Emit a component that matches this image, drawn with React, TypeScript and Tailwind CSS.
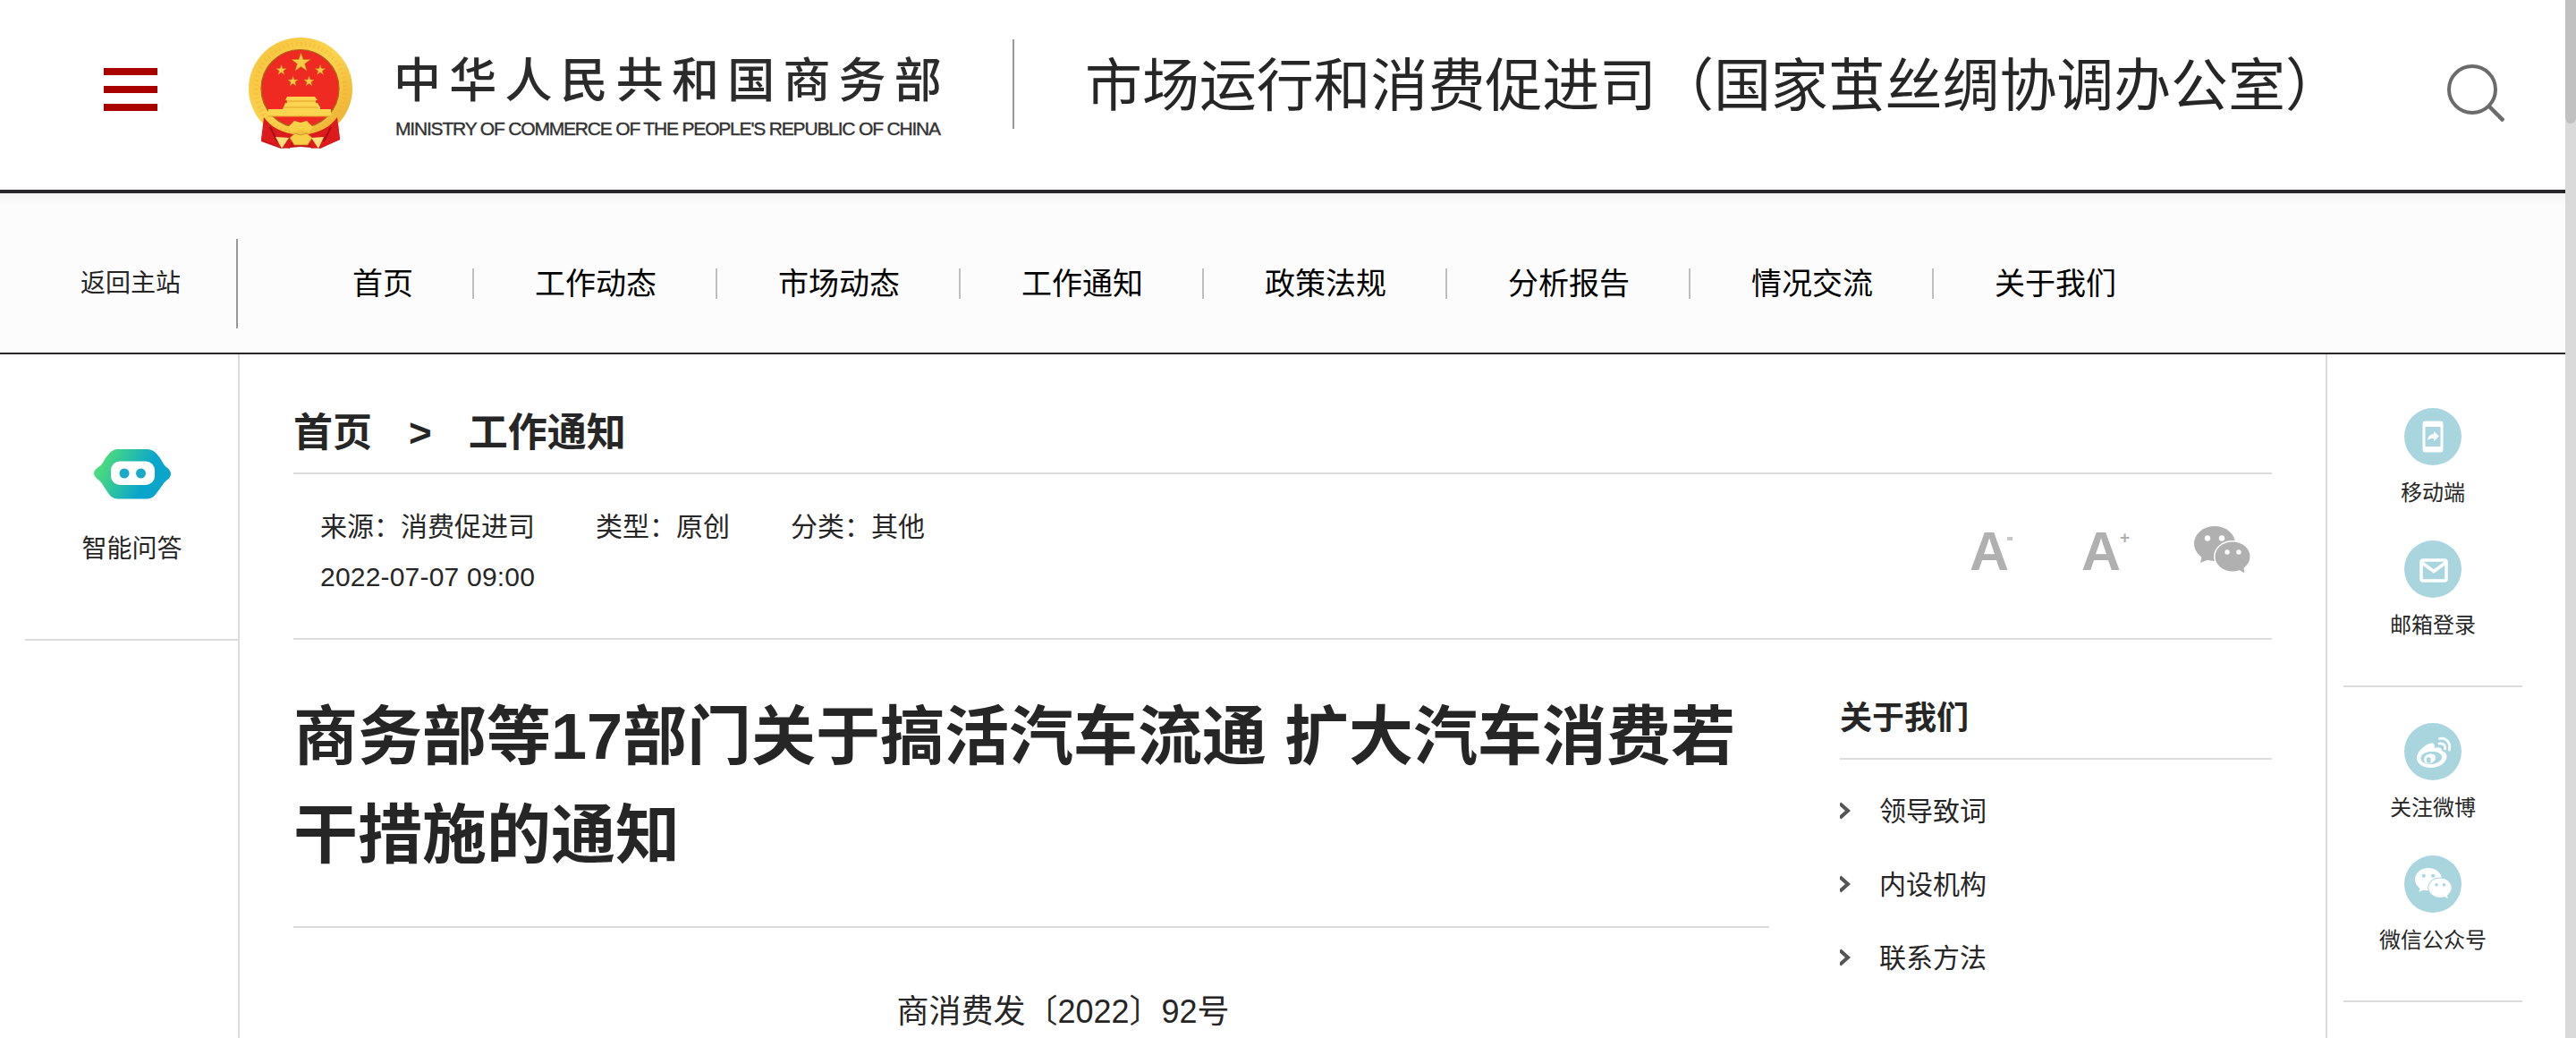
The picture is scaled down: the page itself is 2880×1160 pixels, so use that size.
import { clsx } from 'clsx';

const NAV_ITEMS = ['首页', '工作动态', '市场动态', '工作通知', '政策法规', '分析报告', '情况交流', '关于我们'];
const ABOUT_LINKS = ['领导致词', '内设机构', '联系方法'];
const META = ['来源：消费促进司', '类型：原创', '分类：其他'];

function Star({ x, y, r }: { x: number; y: number; r: number }) {
    const points = Array.from({ length: 10 }, (_, i) => {
        const radius = i % 2 === 0 ? r : r * 0.4;
        const angle = (Math.PI / 5) * i - Math.PI / 2;
        return `${x + radius * Math.cos(angle)},${y + radius * Math.sin(angle)}`;
    }).join(' ');

    return <polygon points={points} fill="#f6cc45" stroke="#c9791d" strokeWidth="0.6" />;
}

function Emblem() {
    return (
        <svg viewBox="0 0 116 124" className="h-[124px] w-[116px]">
            <defs>
                <linearGradient id="gold" x1="0" y1="0" x2="1" y2="1">
                    <stop offset="0" stopColor="#f6c23c" />
                    <stop offset="0.5" stopColor="#fbd34f" />
                    <stop offset="1" stopColor="#e9a92c" />
                </linearGradient>
            </defs>
            <path d="M18 88 L14 116 L36 124 L58 122 L80 124 L102 114 L99 88 Z" fill="#c81118" />
            <ellipse cx="58" cy="57" rx="58" ry="57" fill="url(#gold)" />
            <circle cx="58" cy="57" r="50" fill="none" stroke="#eda92b" strokeWidth="5" strokeDasharray="2 3" opacity="0.3" />
            <circle cx="57.5" cy="57" r="43.5" fill="#ee2a22" stroke="#a8681c" strokeWidth="1.2" />
            <Star x={58.5} y={28} r={11} />
            <Star x={36.5} y={36.5} r={6} />
            <Star x={80} y={36.5} r={6} />
            <Star x={49.5} y={49} r={6} />
            <Star x={67.5} y={49} r={6} />
            <path
                d="M43 66 h31 l3 4 h-2 v3 h2 l3 5 v2 h12 v8 h-70 v-8 h16 l3 -7 h2 v-3 h-2 Z"
                fill="#fbd450"
            />
            <path d="M39 78 h38 M42 71 h32" stroke="#e7a02b" strokeWidth="1" fill="none" />
            <path d="M22 88 H92" stroke="#e7a02b" strokeWidth="1" />
            <path d="M17 89 C24 99 36 106 50 108 L46 124 L34 122 L14 114 Z" fill="#dd1a1c" />
            <path d="M99 89 C92 99 80 106 66 108 L70 124 L82 122 L102 114 Z" fill="#dd1a1c" />
            <path d="M24 100 L32 116 M92 100 L84 116" stroke="#a80e13" strokeWidth="2" fill="none" />
            <path d="M44 100 L51 93 L58 95 L65 93 L72 100 L67 106 L58 103 L49 106 Z" fill="#f9cf48" />
            <path d="M46 112 L52 107 L58 109 L65 107 L71 112 L66 120 H51 Z" fill="#f9cf48" stroke="#c8871f" strokeWidth="0.8" />
            <path d="M30 111 L45 112 L37 124 Z M84 111 L70 112 L78 124 Z" fill="#fae07c" />
        </svg>
    );
}

function SearchIcon() {
    return (
        <svg viewBox="0 0 64 64" className="h-16 w-16" fill="none" stroke="#6b6b6b" strokeWidth="4">
            <circle cx="28" cy="28" r="26" />
            <path d="M46.5 46.5 L63 63" strokeWidth="4.5" />
        </svg>
    );
}

function RobotIcon() {
    return (
        <svg viewBox="0 0 86 56" className="h-14 w-[86px]">
            <defs>
                <linearGradient id="robot" x1="0" y1="0.3" x2="1" y2="0.6">
                    <stop offset="0.1" stopColor="#4ada7f" />
                    <stop offset="0.7" stopColor="#0aa5cb" />
                </linearGradient>
            </defs>
            <path
                d="M27 0 H59 Q65 0 69 4 Q74 9 77 15 Q78.500 18 81 20 Q86 23.500 86 27.500 Q86 31.500 81 35 Q78.500 37 76 41 L69 50.500 Q65 55.500 59 55.500 H27 Q21 55.500 17 50.500 L10 40 Q8.500 37.500 6 35 Q0 30.500 0 27 Q0 23.500 5 20 Q8.500 18 10 15 Q13 9 17 5 Q21 0 27 0 Z"
                fill="url(#robot)"
            />
            <rect x="19" y="13.500" width="49" height="26.500" rx="10" fill="#fff" />
            <circle cx="34" cy="27" r="5.500" fill="#1aa9c9" />
            <circle cx="52.500" cy="27" r="5.500" fill="#1aa9c9" />
        </svg>
    );
}

function WechatShape({ color, eyes }: { color: string; eyes: string }) {
    return (
        <>
            <path d="M9 32 L7 41 L17 37 Z" fill={color} />
            <ellipse cx="23" cy="19.500" rx="23" ry="19.500" fill={color} />
            <circle cx="15" cy="13.500" r="3.200" fill={eyes} />
            <circle cx="31" cy="13.500" r="3.200" fill={eyes} />
            <ellipse cx="43" cy="34" rx="21" ry="18" fill={eyes} />
            <path d="M49 48 L56.500 52.500 L55 44 Z" fill={color} />
            <ellipse cx="43" cy="34" rx="19.500" ry="16.500" fill={color} />
            <circle cx="37" cy="29" r="2.700" fill={eyes} />
            <circle cx="50" cy="29" r="2.700" fill={eyes} />
        </>
    );
}

const PhoneIcon = () => (
    <>
        <rect x="22" y="16" width="20" height="32" rx="2" fill="none" stroke="#fff" strokeWidth="3" />
        <path d="M21 15 H43 V21 H21 Z M21 43 H43 V49 H21 Z" fill="#fff" />
        <path d="M26 36 Q27 29 33 29 V26 L39 31.500 L33 37 V34 Q29 33.500 26 36 Z" fill="#fff" />
    </>
);

const MailIcon = () => (
    <>
        <rect x="19" y="22" width="28" height="23" rx="2" fill="none" stroke="#fff" strokeWidth="3.500" />
        <path d="M20 25 L33 34.500 L46 25" fill="none" stroke="#fff" strokeWidth="3.500" />
    </>
);

const WeiboIcon = () => (
    <>
        <path
            fillRule="evenodd"
            fill="#fff"
            d="M14 39 C14 32 24 22.500 31 22.500 Q35 23 33.500 28 Q42 25.500 42 31 Q48 33 47.500 38 C47 45 38 50 30 50 C21 50 14 46 14 39 Z M18.500 39.500 C19 44 24 46.500 30.500 46 C37 45.500 42.500 42 42 37.500 C41.500 33.500 36 31.500 29.500 32 C23 32.500 18 35.500 18.500 39.500 Z"
        />
        <path fillRule="evenodd" fill="#fff" d="M22 41 C22 36.500 26 34.500 30 34.500 C34.500 34.500 36 38 34.500 41 C32.500 45 28 46 25 45 C23 44.300 22 43 22 41 Z M25 41.500 A2.500 2.200 0 1 0 29.500 41.500 A2.500 2.200 0 1 0 25 41.500 Z" />
        <path d="M39 23 C43 22 46.500 25 45.500 29 M39.500 17.500 C46 16 52 21 50.500 30" fill="none" stroke="#fff" strokeWidth="2.800" strokeLinecap="round" />
    </>
);

const WechatIcon = () => (
    <g transform="translate(12 14) scale(0.65)">
        <WechatShape color="#fff" eyes="#a9d5df" />
    </g>
);

const TOOL_GROUPS = [
    [
        { label: '移动端', Icon: PhoneIcon },
        { label: '邮箱登录', Icon: MailIcon },
    ],
    [
        { label: '关注微博', Icon: WeiboIcon },
        { label: '微信公众号', Icon: WechatIcon },
    ],
];

function Header() {
    return (
        <header className="flex h-[216px] items-start border-b-4 border-[#28262a] bg-white">
            <button className="mt-[76px] ml-[116px] flex w-[60px] flex-col gap-3">
                <span className="h-2 w-full bg-[#a90000]" />
                <span className="h-2 w-full bg-[#a90000]" />
                <span className="h-2 w-full bg-[#a90000]" />
            </button>
            <div className="mt-[42px] ml-[102px] flex">
                <Emblem />
                <div className="ml-[46px] w-[632px] whitespace-nowrap">
                    <div className="mt-3 text-[53px] leading-[74px] font-medium tracking-[9.2px] text-[#2b2b2b]">
                        中华人民共和国商务部
                    </div>
                    <div className="mt-1 ml-0.5 text-[21px] leading-6 tracking-[-1.18px] text-[#333] [-webkit-text-stroke:0.4px_#333]">
                        MINISTRY OF COMMERCE OF THE PEOPLE'S REPUBLIC OF CHINA
                    </div>
                </div>
            </div>
            <div className="mt-11 ml-[60px] h-[100px] w-0.5 bg-[#999]" />
            <h1 className="mt-12 ml-[79px] w-[1523px] text-[64px] leading-[96px] tracking-[-0.1px] whitespace-nowrap">
                市场运行和消费促进司（国家茧丝绸协调办公室）
            </h1>
            <button className="mt-[72px]">
                <SearchIcon />
            </button>
        </header>
    );
}

function Nav() {
    return (
        <nav className="flex h-[180px] items-center border-b-2 border-[#28262a] bg-[#fcfcfc] bg-linear-to-b from-[#f5f5f6] to-[#fcfcfc] to-8% pt-6">
            <a className="flex h-[100px] w-[266px] items-center border-r-2 border-[#999] pl-[90px] text-[28px]">返回主站</a>
            <ul className="flex pl-[60px]">
                {NAV_ITEMS.map((item, i) => (
                    <li
                        key={item}
                        className={clsx(
                            'h-[34px] pr-[66px] pl-[68px] text-[34px] leading-[34px] whitespace-nowrap text-black',
                            i < NAV_ITEMS.length - 1 && 'border-r-2 border-[#bfbfbf]',
                        )}
                    >
                        {item}
                    </li>
                ))}
            </ul>
        </nav>
    );
}

function LeftRail() {
    return (
        <aside className="w-[268px] border-r-2 border-[#dcdcdc]">
            <div className="ml-7 flex h-80 flex-col items-center border-b-2 border-[#dcdcdc] pt-[106px] pl-px">
                <RobotIcon />
                <span className="mt-9 text-[28px] leading-10">智能问答</span>
            </div>
        </aside>
    );
}

function MetaBar() {
    return (
        <div className="flex h-[185px] justify-between border-b-2 border-[#dcdcdc] pr-6 pl-[30px]">
            <div className="pt-[31px] text-[30px] leading-[56px]">
                <div className="flex gap-[68px]">
                    {META.map((text) => (
                        <span key={text}>{text}</span>
                    ))}
                </div>
                <div className="tracking-[0.2px]">2022-07-07 09:00</div>
            </div>
            <div className="flex pt-[58px] font-bold text-[#b0b0b0]">
                <span className="flex w-[125px] items-start">
                    <span className="-ml-px w-[42px] text-[61px] leading-[56px]">A</span>
                    <span className="mt-3 h-1 w-1.5 bg-[#c8c8c8]" />
                </span>
                <span className="flex w-[125px] items-start">
                    <span className="-ml-px w-[43px] text-[61px] leading-[56px]">A</span>
                    <span className="mt-0.5 text-[19px] leading-[22px]">+</span>
                </span>
                <svg viewBox="0 0 63 53" className="h-[53px] w-[63px]">
                    <WechatShape color="#b0b0b0" eyes="#fff" />
                </svg>
            </div>
        </div>
    );
}

function Article() {
    return (
        <main className="w-[2332px] pl-[60px]">
            <div className="w-[2212px]">
                <div className="flex h-[134px] items-center border-b-2 border-[#dcdcdc] pt-11 text-[44px] font-bold">
                    <span>首页</span>
                    <span className="mx-[41px]">&gt;</span>
                    <span>工作通知</span>
                </div>
                <MetaBar />
                <div className="flex justify-between">
                    <div className="w-[1650px]">
                        <h2 className="h-[322px] border-b-2 border-[#dcdcdc] pt-[53px] text-[72px] leading-[110px] font-bold">
                            商务部等17部门关于搞活汽车流通 扩大汽车消费若干措施的通知
                        </h2>
                        <p className="mt-[67px] pl-[71px] text-center text-4xl leading-[54px]">商消费发〔2022〕92号</p>
                    </div>
                    <div className="w-[483px]">
                        <h3 className="h-[134px] border-b-2 border-[#dcdcdc] pt-[61px] text-4xl leading-[54px] font-bold">关于我们</h3>
                        <ul className="pt-4">
                            {ABOUT_LINKS.map((link) => (
                                <li key={link} className="flex h-[82px] items-center text-[30px]">
                                    <svg viewBox="0 0 12 20" className="mr-8 h-5 w-3" fill="none" stroke="#555" strokeWidth="4">
                                        <path d="M0 2 L9 10 L0 18" />
                                    </svg>
                                    {link}
                                </li>
                            ))}
                        </ul>
                    </div>
                </div>
            </div>
        </main>
    );
}

function RightRail() {
    return (
        <aside className="w-[268px] border-l-2 border-[#dcdcdc] pl-[18px]">
            {TOOL_GROUPS.map((group, i) => (
                <div
                    key={group[0].label}
                    className={clsx('w-[200px] border-b-2 border-[#dcdcdc]', i === 0 ? 'h-[372px] pt-[60px]' : 'h-[352px] pt-10')}
                >
                    {group.map(({ label, Icon }) => (
                        <div key={label} className="flex h-[148px] flex-col items-center">
                            <svg viewBox="0 0 64 64" className="h-16 w-16">
                                <circle cx="32" cy="32" r="32" fill="#a9d5df" />
                                <Icon />
                            </svg>
                            <span className="mt-[13px] text-2xl leading-9 whitespace-nowrap">{label}</span>
                        </div>
                    ))}
                </div>
            ))}
        </aside>
    );
}

export default function App() {
    return (
        <div className="flex h-[1160px] w-[2880px] overflow-hidden bg-white font-['Liberation_Sans','Noto_Sans_CJK_SC',sans-serif] text-[#262626]">
            <div className="w-[2868px]">
                <Header />
                <Nav />
                <div className="flex h-[764px]">
                    <LeftRail />
                    <Article />
                    <RightRail />
                </div>
            </div>
            <div className="w-3 bg-[#dadada]">
                <div className="h-[138px] rounded-b-md bg-[#c1c1c1]" />
            </div>
        </div>
    );
}
